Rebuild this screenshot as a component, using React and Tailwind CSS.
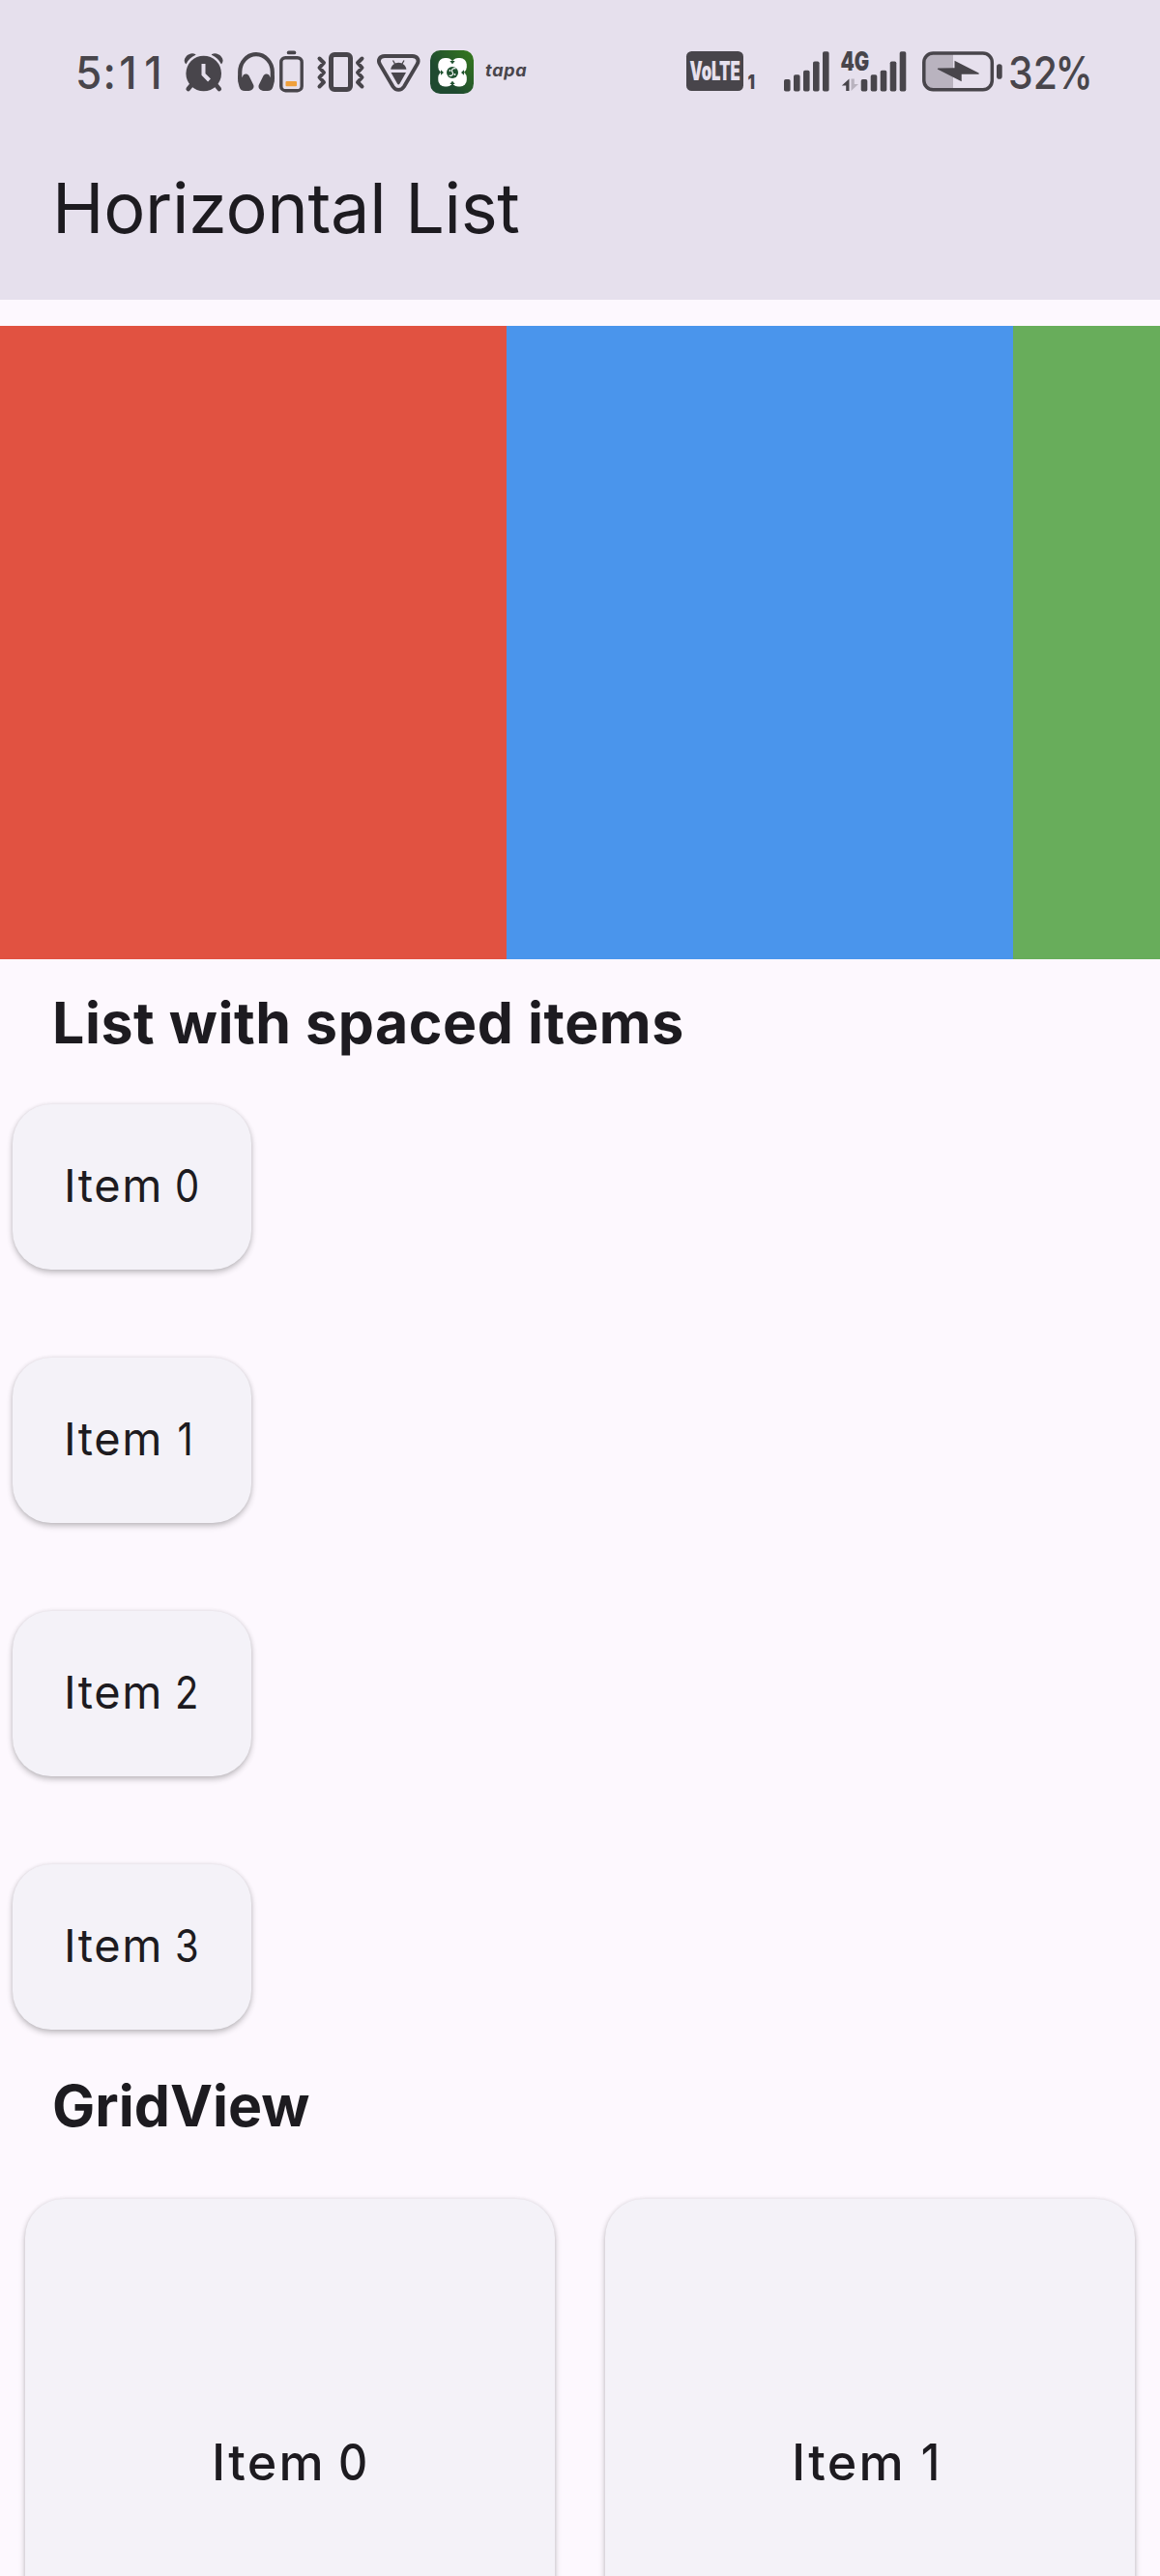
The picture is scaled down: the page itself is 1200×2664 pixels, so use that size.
import React from 'react';

const INK = '#48454b';

function StatusIcon({ x, w, className = '', children }) {
  return (
    <svg
      className={`block h-[46px] shrink-0 overflow-visible ${className}`}
      style={{ width: w }}
      viewBox={`${x} 52 ${w} 46`}
      fill={INK}
      aria-hidden="true"
    >
      {children}
    </svg>
  );
}

function Alarm() {
  return (
    <StatusIcon x={190} w={42}>
      <circle cx="210.700" cy="76" r="18.300" />
      <path d="M198 88l-3.300 4M223.500 88l3.300 4" stroke={INK} strokeWidth="4.600" strokeLinecap="round" fill="none" />
      <path d="M192 66c-1.800-2-1.800-5 .5-7.500s5.800-4 9.500-2.600c.6.300.5.900 0 1.200C197.500 59 194.800 62 192.800 65.800c-.2.400-.5.500-.8.200z" />
      <path d="M229.300 66c1.800-2 1.800-5-.5-7.500s-5.800-4-9.500-2.600c-.6.300-.5.900 0 1.200 4.500 1.900 7.200 4.900 9.200 8.700.2.400.5.500.8.200z" />
      <path d="M210.500 66v11l6 6" stroke="#e6e0ed" strokeWidth="4" fill="none" />
    </StatusIcon>
  );
}

function Headphones() {
  return (
    <StatusIcon x={245} w={40} className="ml-[13px]">
      <path d="M248.200 82v-7.500a16.800 18.300 0 0 1 33.600 0V82" fill="none" stroke={INK} strokeWidth="4.200" />
      <path d="M246.100 78v6l1.400 5.500c.8 3 2.800 4.500 5.800 4.500h4c3.500-.3 6-3 5-6l-4.800-9.700c-1.200-2-4-2.500-5.500-1l-1.700 2.700z" />
      <path d="M283.900 78v6l-1.400 5.500c-.8 3-2.800 4.500-5.800 4.500h-4c-3.500-.3-6-3-5-6l4.800-9.700c1.200-2 4-2.500 5.500-1l1.700 2.700z" />
    </StatusIcon>
  );
}

function SmallBattery() {
  return (
    <StatusIcon x={289} w={25} className="ml-[4px]">
      <rect x="296.800" y="52.500" width="9.500" height="3.800" rx="1.900" />
      <rect x="290.800" y="59.700" width="21.400" height="34" rx="4.500" fill="none" stroke={INK} strokeWidth="3.400" />
      <rect x="295.500" y="84" width="11.500" height="5.200" rx="1" fill="#f0a03c" />
    </StatusIcon>
  );
}

function Vibrate() {
  return (
    <StatusIcon x={327} w={51} className="ml-[13px]">
      <rect x="342.500" y="56.500" width="20" height="36" rx="3.500" fill="none" stroke={INK} strokeWidth="5" />
      <path
        d="M330.500 60.500l4.500 4.500-4.500 5 4.500 5-4.500 5 4.500 5-4.500 4.500M374.500 60.500l-4.500 4.500 4.500 5-4.500 5 4.500 5-4.500 5 4.500 4.500"
        fill="none"
        stroke={INK}
        strokeWidth="4"
        strokeLinecap="round"
        strokeLinejoin="round"
      />
    </StatusIcon>
  );
}

function Debug() {
  return (
    <StatusIcon x={390} w={45} className="ml-[12px]">
      <path
        d="M398 58h28.500c5.500 0 7.500 4.500 5 8.500L418 89.500c-3 4.500-8.500 4.500-11.500 0L393 66.500c-2.500-4-.5-8.500 5-8.500z"
        fill="none"
        stroke={INK}
        strokeWidth="3.900"
      />
      <path d="M404.200 71.700c.5-4 4-7 8.100-7s7.600 3 8.100 7z" />
      <path d="M406.500 62.500l2 3.500M418 62.500l-2 3.500" stroke={INK} strokeWidth="1.300" />
      <path d="M404.500 75h15.500l-6.500 11.500c-.8 1.200-1.800 1.200-2.500 0z" />
    </StatusIcon>
  );
}

function CloverApp() {
  return (
    <StatusIcon x={445} w={45} className="ml-[10px]">
      <defs>
        <linearGradient id="clover" x1="0.300" y1="0.600" x2="1" y2="0">
          <stop offset="0" stopColor="#1f4a30" />
          <stop offset="1" stopColor="#357a1c" />
        </linearGradient>
      </defs>
      <rect x="445" y="52" width="45" height="45" rx="10.500" fill="url(#clover)" />
      <g fill="#fff">
        <rect x="453.300" y="60" width="15.800" height="16" rx="6.800" />
        <rect x="467" y="60" width="15.800" height="16" rx="6.800" />
        <rect x="453.300" y="73.500" width="15.800" height="16" rx="6.800" />
        <rect x="467" y="73.500" width="15.800" height="16" rx="6.800" />
        <rect x="460" y="63" width="16" height="23.500" />
        <rect x="456.500" y="67" width="23" height="15.500" />
      </g>
      <g fill="#1f5230">
        <circle cx="468" cy="75" r="6" />
        <path d="M465.300 63h5.400l-2.700 3.300zM465.300 87h5.400l-2.700-3.300zM456 72.300v5.400l3-2.700zM480 72.300v5.400l-3-2.700z" />
      </g>
      <path d="M471.500 71c-2-.8-4 .3-4 2s1.500 2 1 3.600-2.500 2-4 1.400" fill="none" stroke="#fff" strokeWidth="1.200" />
      <circle cx="465.500" cy="73" r="0.900" fill="#fff" />
      <circle cx="470.500" cy="77" r="0.900" fill="#fff" />
    </StatusIcon>
  );
}

function Volte() {
  return (
    <StatusIcon x={710} w={73}>
      <rect x="710" y="53" width="59" height="41" rx="5.500" />
      <text transform="translate(713.500 83.300) scale(0.620 1)" fill="#e6e0ed" className="font-['Inter'] text-[27px] font-black">
        VoLTE
      </text>
      <text transform="translate(773.500 92) scale(0.820 1)" className="font-['Inter'] text-[20px] font-black">
        1
      </text>
    </StatusIcon>
  );
}

const BAR_TOPS = [82, 77.3, 72.7, 63.5, 53.3];

function Bars({ x }) {
  return BAR_TOPS.map((top, i) => (
    <rect key={top} x={x + i * 10} y={top} width="6.600" height={94.5 - top} rx="1.800" />
  ));
}

function Signal() {
  return (
    <StatusIcon x={811} w={47} className="ml-[28px]">
      <Bars x={811} />
    </StatusIcon>
  );
}

function Signal4G() {
  return (
    <StatusIcon x={870} w={68} className="ml-[12px]">
      <text transform="translate(869.500 73) scale(0.770 1)" className="font-['Inter'] text-[26.500px] font-black">
        4G
      </text>
      <path d="M878.500 81.500v12.500h-3.300v-5.500h-4.400z" />
      <path d="M880.500 81.500v12.500l7.500-7h-4.200v-5.500z" fill="#b9b3bf" />
      <Bars x={890.700} />
    </StatusIcon>
  );
}

function ChargingBattery() {
  return (
    <StatusIcon x={954} w={83} className="ml-[16px]">
      <path d="M986 55v37.500H967a11 11 0 0 1-11-11V66a11 11 0 0 1 11-11z" fill="#b9b3bf" />
      <rect x="955.800" y="55" width="70.500" height="37.800" rx="9.500" fill="none" stroke={INK} strokeWidth="3.500" />
      <rect x="1031" y="66.300" width="5.700" height="15.400" rx="2.800" />
      <path d="M970.500 70.500l17-.3v-7.400l25 12.700c.5.500.3 1.300-.5 1.300h-17.300v7.500l-24.500-12.500c-.6-.5-.4-1.300.3-1.300z" />
    </StatusIcon>
  );
}

function StatusBar() {
  return (
    <div className="flex h-[150px] items-start justify-between pl-[78px] pr-[74px] pt-[52px] font-['Inter'] text-[47px] font-medium leading-[46px] text-[#48454b]">
      <div className="flex h-[46px]">
        <span className="w-[112px] shrink-0 whitespace-nowrap">
          <span className="inline-block origin-left scale-x-[0.940]">
            <span className="tracking-[1.300px]">5</span>
            <span className="tracking-[3.600px]">:</span>
            <span className="tracking-[8px]">11</span>
          </span>
        </span>
        <Alarm />
        <Headphones />
        <SmallBattery />
        <Vibrate />
        <Debug />
        <CloverApp />
        <span className="ml-[12px] text-[18px] font-bold italic leading-[42px] tracking-[0.700px]">tapa</span>
      </div>
      <div className="flex h-[46px]">
        <Volte />
        <Signal />
        <Signal4G />
        <ChargingBattery />
        <span className="ml-[6px] flex w-[83px] shrink-0 whitespace-nowrap">
          <span className="w-[49px] shrink-0">
            <span className="inline-block origin-left scale-x-[0.870]">32</span>
          </span>
          <span className="inline-block shrink-0 origin-left scale-x-[0.810] font-semibold">%</span>
        </span>
      </div>
    </div>
  );
}

function SectionTitle({ children, className }) {
  return (
    <h2 className={`whitespace-nowrap pl-[54px] text-[59px] font-bold leading-[72px] ${className}`}>
      <span className="inline-block">{children}</span>
    </h2>
  );
}

function ItemLabel({ n, className, digitClassName }) {
  return (
    <span className={`whitespace-pre leading-[60px] ${className}`}>
      Item{' '}
      <span className={`inline-block origin-left tracking-normal ${n === 1 ? 'pl-[3px]' : ''} ${digitClassName}`}>
        {n}
      </span>
    </span>
  );
}

const CARD = 'bg-[#f4f2f8] shadow-[0_3px_6px_rgba(0,0,0,0.24),0_0_4px_rgba(0,0,0,0.08)]';

export default function App() {
  return (
    <div className="h-[2664px] w-[1200px] overflow-hidden bg-[#fdf8fe] font-['Inter',sans-serif] text-[#1d1b20]">
      <header className="h-[310px] bg-[#e6e0ed]">
        <StatusBar />
        <h1 className="whitespace-nowrap pl-[54px] text-[72px] font-normal leading-[130px] tracking-[-0.330px]">
          <span className="inline-block">Horizontal List</span>
        </h1>
      </header>

      <div className="mt-[27px] flex h-[655px] w-[1200px] overflow-hidden">
        <div className="w-[524px] shrink-0 bg-[#e15241]" />
        <div className="w-[524px] shrink-0 bg-[#4a95ec]" />
        <div className="w-[524px] shrink-0 bg-[#68ad5b]" />
      </div>

      <SectionTitle className="pt-[30px] tracking-[0.550px]">List with spaced items</SectionTitle>

      <ul className="mt-[48px] flex flex-col gap-[91px] pl-[13px]">
        {[0, 1, 2, 3].map((n) => (
          <li key={n} className={`flex h-[171px] w-[247px] items-center rounded-[40px] pb-[4px] pl-[53px] ${CARD}`}>
            <ItemLabel
              n={n}
              className="text-[47px] font-normal tracking-[1.550px]"
              digitClassName="ml-[-2.700px] scale-x-[0.850]"
            />
          </li>
        ))}
      </ul>

      <SectionTitle className="pt-[43px]">GridView</SectionTitle>

      <div className="mt-[60px] grid grid-cols-2 gap-[52px] px-[26px]">
        {[0, 1].map((n) => (
          <div key={n} className={`flex h-[548px] items-center rounded-[40px] pb-[2px] pl-[193px] ${CARD}`}>
            <ItemLabel
              n={n}
              className="text-[52px] font-medium tracking-[2.300px]"
              digitClassName="ml-[-3.600px] scale-x-[0.900]"
            />
          </div>
        ))}
      </div>
    </div>
  );
}
